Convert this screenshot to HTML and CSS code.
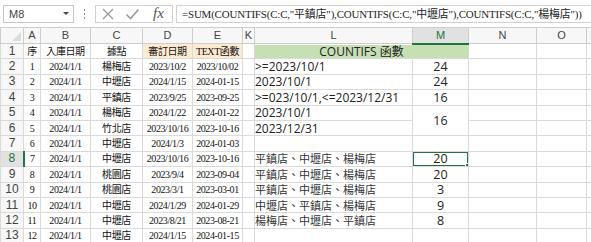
FILE: index.html
```html
<!DOCTYPE html>
<html lang="zh-Hant">
<head>
<meta charset="utf-8">
<title>COUNTIFS</title>
<link rel="stylesheet" href="styles.css">
</head>
<body>
<div class="app">
  <div class="bar">
    <div class="namebox"><span class="ref">M8</span><span class="caret"></span></div>
    <div class="grip"><i></i><i></i><i></i></div>
    <div class="fxbtns">
      <svg class="ico" width="14" height="14" viewBox="0 0 14 14"><path d="M2 2 L12 12 M12 2 L2 12" stroke="#9a9a9a" stroke-width="1.3" fill="none"/></svg>
      <svg class="ico" width="15" height="14" viewBox="0 0 15 14"><path d="M1.5 7.5 L5.5 11.5 L13.5 2.5" stroke="#9a9a9a" stroke-width="1.6" fill="none"/></svg>
      <span class="fx">fx</span>
    </div>
    <div class="formula">=SUM(COUNTIFS(C:C,"平鎮店"),COUNTIFS(C:C,"中壢店"),COUNTIFS(C:C,"楊梅店"))</div>
  </div>
  <table class="sheet">
    <colgroup>
      <col class="c-rh"><col class="c-a"><col class="c-b"><col class="c-c"><col class="c-d"><col class="c-e"><col class="c-k"><col class="c-l"><col class="c-m"><col class="c-n"><col class="c-o"><col class="c-p">
    </colgroup>
    <thead>
      <tr class="hdr">
        <th class="corner"><span class="tri"></span></th><th>A</th><th>B</th><th>C</th><th>D</th><th>E</th><th>K</th><th>L</th><th class="hsel">M</th><th>N</th><th>O</th><th></th>
      </tr>
    </thead>
    <tbody>
      <tr><th class="rh">1</th><td class="s">序</td><td class="s">入庫日期</td><td class="s">據點</td><td class="s peach">審訂日期</td><td class="s peach">TEXT函數</td><td></td><td class="green" colspan="2">COUNTIFS 函數</td><td></td><td></td><td></td></tr>
      <tr><th class="rh">2</th><td class="s">1</td><td class="s">2024/1/1</td><td class="s">楊梅店</td><td class="s">2023/10/2</td><td class="s">2023/10/02</td><td></td><td class="l">&gt;=2023/10/1</td><td class="m">24</td><td></td><td></td><td></td></tr>
      <tr><th class="rh">3</th><td class="s">2</td><td class="s">2024/1/1</td><td class="s">中壢店</td><td class="s">2024/1/15</td><td class="s">2024-01-15</td><td></td><td class="l">2023/10/1</td><td class="m">24</td><td></td><td></td><td></td></tr>
      <tr><th class="rh">4</th><td class="s">3</td><td class="s">2024/1/1</td><td class="s">平鎮店</td><td class="s">2023/9/25</td><td class="s">2023-09-25</td><td></td><td class="l">&gt;=023/10/1,&lt;=2023/12/31</td><td class="m">16</td><td></td><td></td><td></td></tr>
      <tr><th class="rh">5</th><td class="s">4</td><td class="s">2024/1/1</td><td class="s">楊梅店</td><td class="s">2024/1/22</td><td class="s">2024-01-22</td><td></td><td class="l">2023/10/1</td><td class="m" rowspan="2">16</td><td></td><td></td><td></td></tr>
      <tr><th class="rh">6</th><td class="s">5</td><td class="s">2024/1/1</td><td class="s">竹北店</td><td class="s">2023/10/16</td><td class="s">2023-10-16</td><td></td><td class="l">2023/12/31</td><td></td><td></td><td></td></tr>
      <tr><th class="rh">7</th><td class="s">6</td><td class="s">2024/1/1</td><td class="s">中壢店</td><td class="s">2024/1/3</td><td class="s">2024-01-03</td><td></td><td></td><td></td><td></td><td></td><td></td></tr>
      <tr><th class="rh rsel">8</th><td class="s">7</td><td class="s">2024/1/1</td><td class="s">中壢店</td><td class="s">2023/10/16</td><td class="s">2023-10-16</td><td></td><td class="lc">平鎮店、中壢店、楊梅店</td><td class="m sel">20</td><td></td><td></td><td></td></tr>
      <tr><th class="rh">9</th><td class="s">8</td><td class="s">2024/1/1</td><td class="s">桃園店</td><td class="s">2023/9/4</td><td class="s">2023-09-04</td><td></td><td class="lc">平鎮店、中壢店、楊梅店</td><td class="m">20</td><td></td><td></td><td></td></tr>
      <tr><th class="rh">10</th><td class="s">9</td><td class="s">2024/1/1</td><td class="s">桃園店</td><td class="s">2023/3/1</td><td class="s">2023-03-01</td><td></td><td class="lc">平鎮店、中壢店、楊梅店</td><td class="m">3</td><td></td><td></td><td></td></tr>
      <tr><th class="rh">11</th><td class="s">10</td><td class="s">2024/1/1</td><td class="s">中壢店</td><td class="s">2024/1/29</td><td class="s">2024-01-29</td><td></td><td class="lc">中壢店、平鎮店、楊梅店</td><td class="m">9</td><td></td><td></td><td></td></tr>
      <tr><th class="rh">12</th><td class="s">11</td><td class="s">2024/1/1</td><td class="s">中壢店</td><td class="s">2023/8/21</td><td class="s">2023-08-21</td><td></td><td class="lc">楊梅店、中壢店、平鎮店</td><td class="m">8</td><td></td><td></td><td></td></tr>
      <tr><th class="rh">13</th><td class="s">12</td><td class="s">2024/1/1</td><td class="s">中壢店</td><td class="s">2024/1/15</td><td class="s">2024-01-15</td><td></td><td></td><td></td><td></td><td></td><td></td></tr>
    </tbody>
  </table>
</div>
</body>
</html>
```

FILE: styles.css
```css
html, body {
  margin: 0;
  padding: 0;
  background: #ffffff;
  overflow: hidden;
}
body {
  font-family: "Liberation Sans", "Noto Sans CJK TC", sans-serif;
  color: #222;
}
.app {
  width: 591px;
  height: 242px;
  overflow: hidden;
}
.bar {
  height: 27px;
  display: flex;
  align-items: center;
  box-sizing: border-box;
  padding-left: 3px;
}
.namebox {
  flex: 0 0 71px;
  height: 18px;
  box-sizing: border-box;
  border: 1px solid #c6c6c6;
  display: flex;
  align-items: center;
  justify-content: space-between;
  padding: 0 4px 0 5px;
  font-size: 11px;
  color: #444;
}
.caret {
  width: 0;
  height: 0;
  border-left: 3px solid transparent;
  border-right: 3px solid transparent;
  border-top: 3px solid #444;
}
.grip {
  flex: 0 0 21px;
  display: flex;
  flex-direction: column;
  align-items: center;
  gap: 2px;
}
.grip i {
  width: 1px;
  height: 2px;
  background: #888;
}
.fxbtns {
  flex: 0 0 78px;
  height: 18px;
  box-sizing: border-box;
  border: 1px solid #d0d0d0;
  display: flex;
  align-items: center;
  gap: 10px;
  padding-left: 5px;
}
.fx {
  font-family: "Liberation Serif", serif;
  font-style: italic;
  font-size: 15px;
  color: #555;
  margin-left: 3px;
}
.formula {
  margin-left: 3px;
  flex: 1 1 auto;
  min-width: 0;
  overflow: hidden;
  height: 18px;
  box-sizing: border-box;
  border: 1px solid #d0d0d0;
  border-right: 0;
  padding-left: 5px;
  font-family: "Liberation Serif", "Noto Sans CJK TC", serif;
  font-size: 10.9px;
  letter-spacing: -0.15px;
  line-height: 16px;
  white-space: nowrap;
  color: #222;
}
.sheet {
  border-collapse: collapse;
  table-layout: fixed;
  width: 641px;
}
.c-rh { width: 23px; }
.c-a { width: 17px; }
.c-b { width: 50px; }
.c-c { width: 52px; }
.c-d { width: 50px; }
.c-e { width: 50px; }
.c-k { width: 12px; }
.c-l { width: 158px; }
.c-m { width: 56px; }
.c-n { width: 68px; }
.c-o { width: 50px; }
.c-p { width: 55px; }
.sheet th, .sheet td {
  padding: 0;
  border: 1px solid #dadada;
  overflow: hidden;
  white-space: nowrap;
  line-height: 13px;
}
.hdr {
  height: 16px;
}
.hdr th {
  font-weight: normal;
  font-size: 11px;
  color: #444;
  background: #f7f7f7;
  border-color: #cdcdcd;
  text-align: center;
}
.hdr .corner {
  position: relative;
}
.tri {
  position: absolute;
  right: 2px;
  bottom: 2px;
  width: 0;
  height: 0;
  border-left: 9px solid transparent;
  border-bottom: 9px solid #dcdcdc;
}
.hdr .hsel {
  background: #e1e1e1;
  color: #217346;
  border-bottom: 2px solid #217346;
}
tbody tr {
  height: 15.4px;
}
.rh {
  font-weight: normal;
  font-size: 12px;
  color: #444;
  background: #f7f7f7;
  border-color: #cdcdcd;
  text-align: center;
}
.rh.rsel {
  background: #e1e1e1;
  color: #217346;
  border-right: 2px solid #217346;
}
.s {
  text-align: center;
  font-family: "Liberation Serif", "Noto Sans CJK TC", serif;
  font-size: 10px;
  letter-spacing: -0.4px;
  color: #111;
}
.peach {
  background: #fdebd1;
}
.green {
  background: #c6e0b4;
  text-align: center;
  font-family: "Open Sans", "Noto Sans CJK TC", sans-serif;
  font-size: 12px;
  color: #222;
}
.l {
  font-family: "Open Sans", "Noto Sans CJK TC", sans-serif;
  font-size: 12px;
  padding-left: 3px;
  color: #222;
}
.lc {
  font-family: "Noto Sans CJK TC", sans-serif;
  font-size: 11px;
  padding-left: 3px;
  color: #333;
}
.m {
  text-align: center;
  font-family: "Open Sans", sans-serif;
  font-size: 12.5px;
  color: #222;
}
.sel {
  position: relative;
}
.sel::after {
  content: "";
  position: absolute;
  left: -1px;
  top: -1px;
  right: -1px;
  bottom: -1px;
  border: 2px solid #217346;
}
.sel::before {
  content: "";
  position: absolute;
  right: -4px;
  bottom: -4px;
  width: 5px;
  height: 5px;
  background: #217346;
  border: 1px solid #fff;
  z-index: 2;
}
```
